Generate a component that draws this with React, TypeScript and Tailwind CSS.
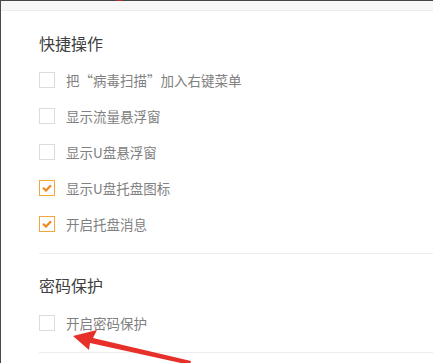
import React from "react";

const font = { fontFamily: '"Noto Sans CJK SC", "Noto Sans", sans-serif' };

function Box({ checked }: { checked?: boolean }) {
  return checked ? (
    <span className="flex h-[16px] w-[16px] items-center justify-center border border-[#f3a63b] bg-white">
      <svg width="10" height="8" viewBox="0 0 10 8">
        <polyline points="1,3.8 4,6.6 9,1.2" fill="none" stroke="#f08a1c" strokeWidth="2.2" />
      </svg>
    </span>
  ) : (
    <span className="block h-[16px] w-[16px] border border-[#dcdcdc] bg-white" />
  );
}

function Row({ label, checked }: { label: string; checked?: boolean }) {
  return (
    <div className="flex h-[36px] items-center gap-[11px]">
      <Box checked={checked} />
      <span className="text-[13.5px] leading-[16px] text-[#808080]">{label}</span>
    </div>
  );
}

export default function App() {
  return (
    <div className="relative h-[363px] w-[433px] overflow-hidden border-l border-[#4a4a4a] bg-white" style={font}>
      <div className="h-[1px] bg-[#444]" />
      <div className="h-[10px] border-b border-[#ececec] bg-[#f7f7f7]" />
      <div className="pl-[38px] pt-[20px]">
        <div className="h-[24px] text-[16px] leading-[24px] text-[#404040]">快捷操作</div>
        <div className="mt-[7px]">
          <Row label="把“病毒扫描”加入右键菜单" />
          <Row label="显示流量悬浮窗" />
          <Row label="显示U盘悬浮窗" />
          <Row label="显示U盘托盘图标" checked />
          <Row label="开启托盘消息" checked />
        </div>
        <div className="mt-[11px] border-t border-[#ececec]" />
        <div className="mt-[19px] h-[24px] text-[16px] leading-[24px] text-[#404040]">密码保护</div>
        <div className="mt-[8px]">
          <Row label="开启密码保护" />
        </div>
        <div className="mt-[11px] border-t border-[#ececec]" />
      </div>
      <span className="absolute left-[115px] top-0 h-[1px] w-[6px] bg-[#b03030]" />
      <svg className="pointer-events-none absolute left-0 top-0" width="433" height="363" viewBox="0 0 433 363">
        <polygon points="72,336 96,330 92,338 190,361 189,365 89,343 88,350" fill="#e8302a" />
      </svg>
    </div>
  );
}
